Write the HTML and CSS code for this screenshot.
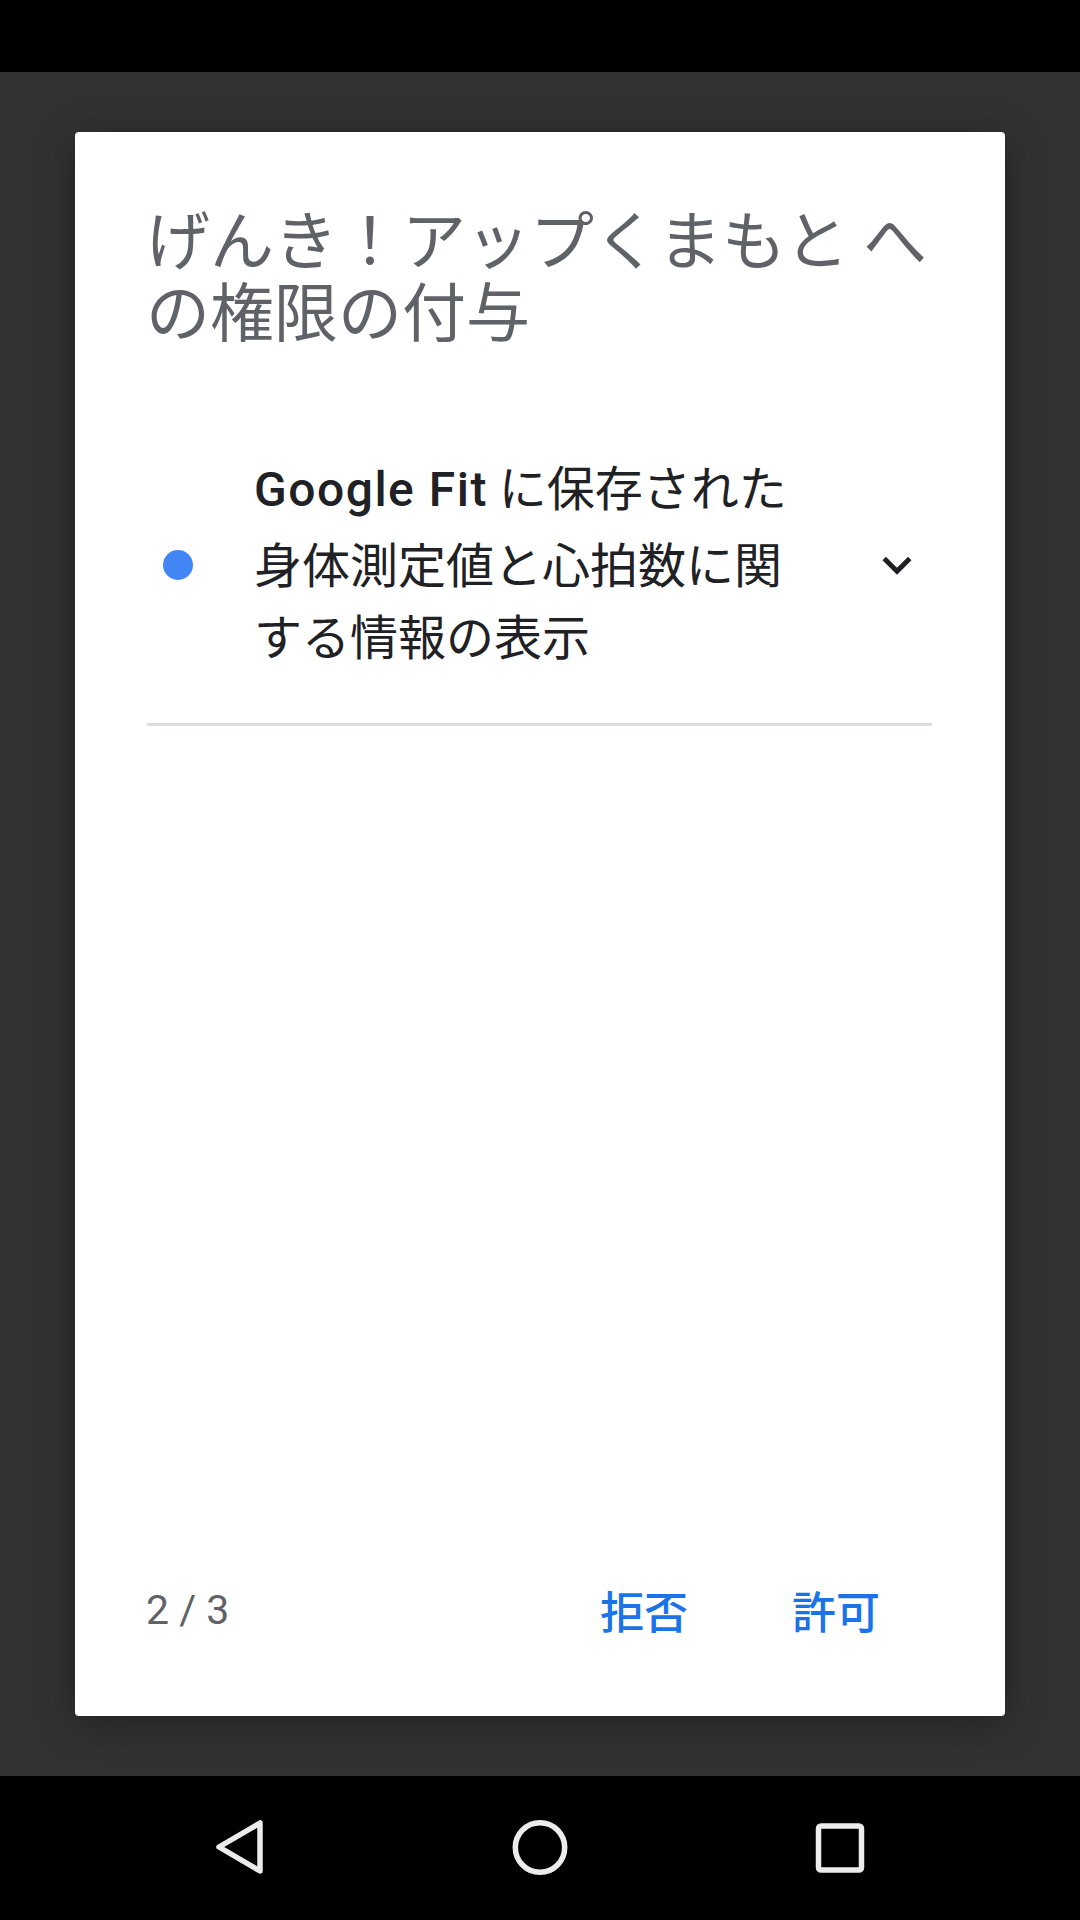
FILE: index.html
```html
<!DOCTYPE html>
<html lang="ja">
<head>
    <meta charset="UTF-8">
    <meta name="viewport" content="width=device-width, initial-scale=1.0">
    <title>権限の付与</title>
    <link rel="stylesheet" href="styles.css">
</head>
<body>

    <!-- ステータスバー -->
    <div class="status-bar"></div>

    <!-- ダイアログ -->
    <div class="scrim">
        <div class="dialog">
            <h1 class="dialog-title">げんき！アップくまもと へ<br>の権限の付与</h1>

            <div class="permission-row">
                <span class="dot"></span>
                <p class="permission-text"><span class="brand">Google Fit</span> に保存された<br>身体測定値と心拍数に関<br>する情報の表示</p>
                <svg class="chevron" viewBox="0 0 24 24">
                    <path d="M16.59 8.59L12 13.17 7.41 8.59 6 10l6 6 6-6z" fill="#202124"/>
                </svg>
            </div>

            <div class="dialog-footer">
                <span class="counter">2 / 3</span>
                <div class="actions">
                    <button class="action">拒否</button>
                    <button class="action">許可</button>
                </div>
            </div>
        </div>
    </div>

    <!-- ナビゲーションバー -->
    <div class="nav-bar">
        <svg class="nav-icon" viewBox="0 0 100 100">
            <path d="M29 49 L70 25 L70 73 Z" fill="none" stroke="#ececec" stroke-width="5.5" stroke-linejoin="round"/>
        </svg>
        <svg class="nav-icon" viewBox="0 0 100 100">
            <circle cx="50" cy="49.5" r="24.7" fill="none" stroke="#ececec" stroke-width="5.5"/>
        </svg>
        <svg class="nav-icon" viewBox="0 0 100 100">
            <rect x="28.5" y="28" width="43" height="44" rx="2.5" fill="none" stroke="#ececec" stroke-width="5.5"/>
        </svg>
    </div>

</body>
</html>
```

FILE: styles.css
```css
/* 全体 */
body {
    margin: 0;
    width: 1080px;
    height: 1920px;
    display: flex;
    flex-direction: column;
    background-color: #000;
    font-family: "Noto Sans CJK JP", "Noto Sans", sans-serif;
    overflow: hidden;
}

.status-bar {
    height: 72px;
    background-color: #000;
}

/* 背景の暗い部分 */
.scrim {
    height: 1704px;
    box-sizing: border-box;
    padding: 60px 75px;
    background-color: #323232;
}

.dialog {
    height: 100%;
    display: flex;
    flex-direction: column;
    background-color: #fff;
    border-radius: 4px;
    box-shadow: 0 6px 40px rgba(0, 0, 0, 0.35);
}

.dialog-title {
    margin: 0;
    padding: 68px 50px 0 71px;
    font-size: 64px;
    font-weight: 400;
    line-height: 72px;
    color: #5f6368;
}

/* 権限の行 */
.permission-row {
    display: flex;
    align-items: center;
    margin: 105px 73px 0 72px;
    padding: 0 6px 43px 16px;
    border-bottom: 3px solid #dadce0;
}

.dot {
    flex: none;
    width: 30px;
    height: 30px;
    margin-right: 61px;
    border-radius: 50%;
    background-color: #4285f4;
}

.permission-text {
    flex: 1;
    margin: 0;
    padding-bottom: 10px;
    font-size: 48px;
    line-height: 72px;
    color: #202124;
}

.brand {
    font-family: Roboto, sans-serif;
    font-weight: 500;
    letter-spacing: 1.5px;
}

.chevron {
    flex: none;
    width: 58px;
    height: 58px;
}

/* 下部のボタン */
.dialog-footer {
    margin-top: auto;
    height: 120px;
    display: flex;
    align-items: center;
    padding: 0 125px 46px 71px;
}

.counter {
    flex: 1;
    font-family: Roboto, sans-serif;
    font-size: 41px;
    color: #5f6368;
}

.actions {
    display: flex;
    gap: 104px;
}

.action {
    padding: 0;
    border: none;
    background: none;
    font-family: "Noto Sans CJK JP", sans-serif;
    font-size: 44px;
    font-weight: 500;
    color: #1a73e8;
}

.nav-bar {
    height: 144px;
    display: flex;
    justify-content: center;
    align-items: center;
    gap: 200px;
    background-color: #000;
}

.nav-icon {
    width: 100px;
    height: 100px;
}
```
